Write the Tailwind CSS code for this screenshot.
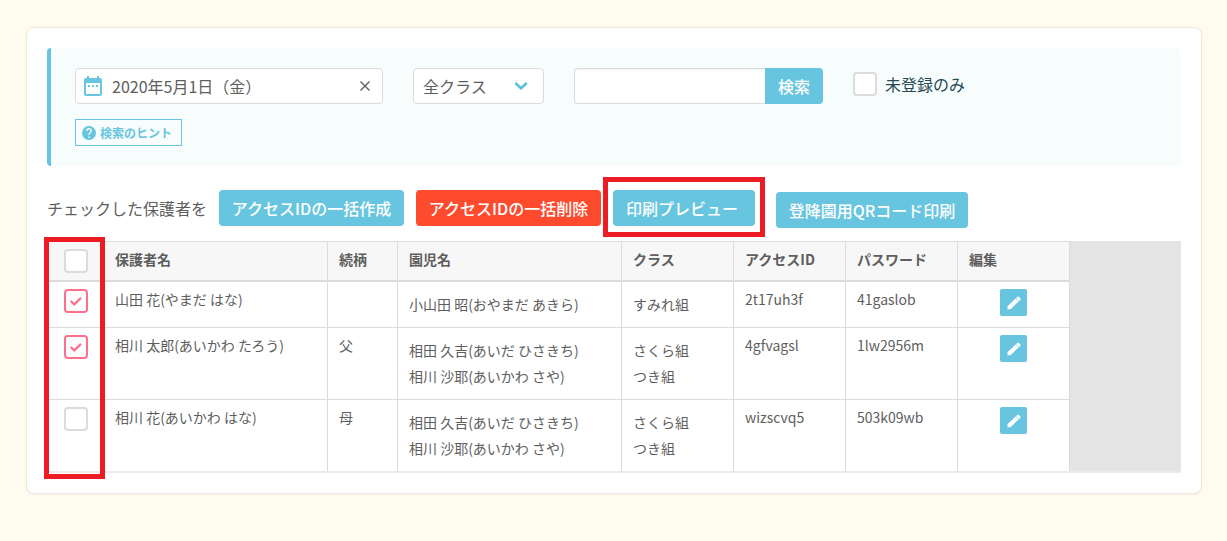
<!DOCTYPE html>
<html lang="ja">
<head>
<meta charset="utf-8">
<meta name="viewport" content="width=device-width, initial-scale=1">
<title>保護者アクセスID管理</title>
<script src="https://cdn.jsdelivr.net/npm/@tailwindcss/browser@4"></script>
</head>
<body class="min-h-screen bg-[#fffbef] py-[27px] pr-[25px] pl-[26px] font-['Noto_Sans_CJK_JP',sans-serif] text-base text-[#5e5e5e]">
<svg class="hidden">
  <symbol id="check" viewBox="0 0 24 24"><path d="M6.700 12l3.600 3.400L17 8.900" fill="none" stroke="#ff6f8b" stroke-width="2.200"/></symbol>
  <symbol id="pencil" viewBox="0 0 16 16"><path fill="#fff" d="M1.500 11.300L9.600 3.500l3 3-8.100 7.800H1.500zM10.300 2.800l.9-.8a1.300 1.300 0 0 1 1.800 0l1.200 1.200a1.300 1.300 0 0 1 0 1.800l-.9.900z"/><path fill="#fff" fill-opacity=".7" d="M9.600 3.500l.7-.7 3 3.100-.7.600z"/></symbol>
</svg>
<main class="rounded-lg border border-[#ebe9df] bg-white p-5 shadow-xs">
  <form class="rounded-sm border-l-4 border-[#68c5df] bg-[#f7fdfd] px-6 py-5">
    <div class="flex flex-wrap items-center gap-[30px]">
      <div class="flex h-9 w-[308px] items-center rounded-sm border border-[#dbdbdb] bg-white pr-3 pl-2">
        <svg class="mr-2 size-5 shrink-0" viewBox="0 0 20 20"><path fill="#68c5df" fill-rule="evenodd" d="M3 0h2v2h8V0h2v2h1a2 2 0 0 1 2 2v14a2 2 0 0 1-2 2H2a2 2 0 0 1-2-2V4a2 2 0 0 1 2-2h1zM2 7v11h14V7zM4 9h2v2H4zM8 9h2v2H8zM12 9h2v2h-2z"/></svg>
        <input type="text" aria-label="日付" value="2020年5月1日（金）" class="h-full min-w-0 flex-1 bg-transparent outline-none">
        <button type="button" aria-label="日付をクリア"><svg class="size-[10px]" viewBox="0 0 10 10"><path d="M0.5 0.5l9 9M9.5 0.5l-9 9" stroke="#5e5e5e" stroke-width="1.4"/></svg></button>
      </div>
      <div class="grid h-9 w-[131px] items-center">
        <select aria-label="クラス" class="col-start-1 row-start-1 h-full w-full appearance-none rounded-sm border border-[#dbdbdb] bg-white pl-[9px] outline-none"><option>全クラス</option></select>
        <svg class="pointer-events-none col-start-1 row-start-1 mr-4 h-2 w-[14px] justify-self-end" viewBox="0 0 14 8"><path d="M1.300 1l5.700 5.200L12.700 1" fill="none" stroke="#5fc2dd" stroke-width="2.800"/></svg>
      </div>
      <div class="flex h-9">
        <input type="text" aria-label="検索キーワード" class="w-[191px] rounded-l-sm border border-r-0 border-[#dbdbdb] bg-white px-2 inset-shadow-xs outline-none">
        <button type="submit" class="w-[58px] rounded-r-sm bg-[#68c5df] font-medium text-white">検索</button>
      </div>
      <label class="flex items-start gap-2 self-start pt-1 leading-6 text-[#264a52]"><input type="checkbox" class="size-6 appearance-none rounded-sm border-2 border-[#dbdbdb] bg-white">未登録のみ</label>
    </div>
    <button type="button" class="mt-[15px] flex h-[27px] w-[107px] items-center gap-1 border border-[#68c5df] px-[6px] text-xs font-bold text-[#68c5df]">
      <svg class="size-[14px]" viewBox="0 0 20 20"><path fill="#68c5df" d="M10 0a10 10 0 1 0 0 20 10 10 0 0 0 0-20zm1 17H9v-2h2v2zm2.070-7.750l-.9.920C11.450 10.900 11 11.500 11 13H9v-.500c0-1.100.450-2.100 1.170-2.830l1.240-1.260A2 2 0 1 0 8 7H6a4 4 0 1 1 8 0c0 .880-.360 1.680-.930 2.250z"/></svg>
      検索のヒント
    </button>
  </form>

  <div class="mt-6 flex items-start gap-3 whitespace-nowrap">
    <span class="leading-9">チェックした保護者を</span>
    <button type="button" class="h-9 w-[185px] rounded-sm bg-[#68c5df] font-medium text-white">アクセスIDの一括作成</button>
    <button type="button" class="h-9 w-[185px] rounded-sm bg-[#ff4b2d] font-medium text-white">アクセスIDの一括削除</button>
    <div class="relative">
      <button type="button" class="block h-9 w-[142px] rounded-sm bg-[#68c5df] pr-1 font-medium text-white">印刷プレビュー</button>
      <div class="pointer-events-none absolute -inset-x-[10px] -top-[13px] -bottom-[11px] border-5 border-[#ed1c24]"></div>
    </div>
    <a href="#" class="ml-[9px] mt-[2px] h-9 w-48 rounded-sm bg-[#68c5df] text-center leading-9 font-medium text-white">登降園用QRコード印刷</a>
  </div>

  <div class="relative mt-[13px] border-b-2 border-[#ebebeb] bg-[#e4e4e4]">
    <table class="w-full table-fixed border-separate border-spacing-0 text-left align-top text-sm leading-5">
      <colgroup><col class="w-[57px]"><col class="w-[224px]"><col class="w-[70px]"><col class="w-[224px]"><col class="w-[112px]"><col class="w-[112px]"><col class="w-[112px]"><col class="w-[112px]"><col></colgroup>
      <thead>
        <tr class="h-[41px] bg-[#f7f7f7] align-top *:border-t *:border-b-2 *:border-[#dbdbdb] *:pt-[7px] *:pl-[11px] *:font-bold">
          <th class="!p-0"><label class="block py-[7px] pl-[17px]"><input type="checkbox" aria-label="すべて選択" class="block size-6 appearance-none rounded-sm border-2 border-[#dbdbdb] bg-white"></label></th>
          <th class="border-r">保護者名</th><th class="border-r">続柄</th><th class="border-r">園児名</th><th class="border-r">クラス</th><th class="border-r">アクセスID</th><th class="border-r">パスワード</th><th class="border-r">編集</th><td class="!border-0 bg-[#e4e4e4]"></td>
        </tr>
      </thead>
      <tbody>
        <tr class="bg-white align-top *:border-b *:border-[#dbdbdb] *:pt-[7px] *:pl-[11px]">
          <td class="!p-0"><label class="grid pt-[7px] pl-[17px]"><input type="checkbox" checked aria-label="山田 花を選択" class="peer col-start-1 row-start-1 size-6 appearance-none rounded-sm border-2 border-[#dbdbdb] bg-white checked:border-[#ff6f8b]"><svg class="pointer-events-none invisible col-start-1 row-start-1 size-6 peer-checked:visible"><use href="#check"/></svg></label></td>
          <td class="border-r">山田 花(やまだ はな)</td><td class="border-r"></td>
          <td class="border-r !pt-[9px] pb-[10px] leading-[26px]">小山田 昭(おやまだ あきら)</td><td class="border-r !pt-[9px] pb-[10px] leading-[26px]">すみれ組</td>
          <td class="border-r">2t17uh3f</td><td class="border-r">41gaslob</td>
          <td class="border-r !pl-0"><button type="button" aria-label="編集" class="mx-auto flex size-[27px] items-center justify-center rounded-xs bg-[#68c5df]"><svg class="size-4"><use href="#pencil"/></svg></button></td><td class="!border-0 bg-[#e4e4e4]"></td>
        </tr>
        <tr class="bg-white align-top *:border-b *:border-[#dbdbdb] *:pt-[7px] *:pl-[11px]">
          <td class="!p-0"><label class="grid pt-[7px] pl-[17px]"><input type="checkbox" checked aria-label="相川 太郎を選択" class="peer col-start-1 row-start-1 size-6 appearance-none rounded-sm border-2 border-[#dbdbdb] bg-white checked:border-[#ff6f8b]"><svg class="pointer-events-none invisible col-start-1 row-start-1 size-6 peer-checked:visible"><use href="#check"/></svg></label></td>
          <td class="border-r">相川 太郎(あいかわ たろう)</td><td class="border-r">父</td>
          <td class="border-r !pt-[9px] pb-[10px] leading-[26px]">相田 久吉(あいだ ひさきち)<br>相川 沙耶(あいかわ さや)</td><td class="border-r !pt-[9px] pb-[10px] leading-[26px]">さくら組<br>つき組</td>
          <td class="border-r">4gfvagsl</td><td class="border-r">1lw2956m</td>
          <td class="border-r !pl-0"><button type="button" aria-label="編集" class="mx-auto flex size-[27px] items-center justify-center rounded-xs bg-[#68c5df]"><svg class="size-4"><use href="#pencil"/></svg></button></td><td class="!border-0 bg-[#e4e4e4]"></td>
        </tr>
        <tr class="bg-white align-top *:border-[#dbdbdb] *:pt-[7px] *:pl-[11px]">
          <td class="!p-0"><label class="grid pt-[7px] pl-[17px]"><input type="checkbox" aria-label="相川 花を選択" class="peer col-start-1 row-start-1 size-6 appearance-none rounded-sm border-2 border-[#dbdbdb] bg-white checked:border-[#ff6f8b]"><svg class="pointer-events-none invisible col-start-1 row-start-1 size-6 peer-checked:visible"><use href="#check"/></svg></label></td>
          <td class="border-r">相川 花(あいかわ はな)</td><td class="border-r">母</td>
          <td class="border-r !pt-[9px] pb-[10px] leading-[26px]">相田 久吉(あいだ ひさきち)<br>相川 沙耶(あいかわ さや)</td><td class="border-r !pt-[9px] pb-[10px] leading-[26px]">さくら組<br>つき組</td>
          <td class="border-r">wizscvq5</td><td class="border-r">503k09wb</td>
          <td class="border-r !pl-0"><button type="button" aria-label="編集" class="mx-auto flex size-[27px] items-center justify-center rounded-xs bg-[#68c5df]"><svg class="size-4"><use href="#pencil"/></svg></button></td><td class="!border-0 bg-[#e4e4e4]"></td>
        </tr>
      </tbody>
    </table>
    <div class="pointer-events-none absolute -top-1 -bottom-2 -left-[3px] w-[61px] border-5 border-[#ed1c24]"></div>
  </div>
</main>
</body>
</html>
